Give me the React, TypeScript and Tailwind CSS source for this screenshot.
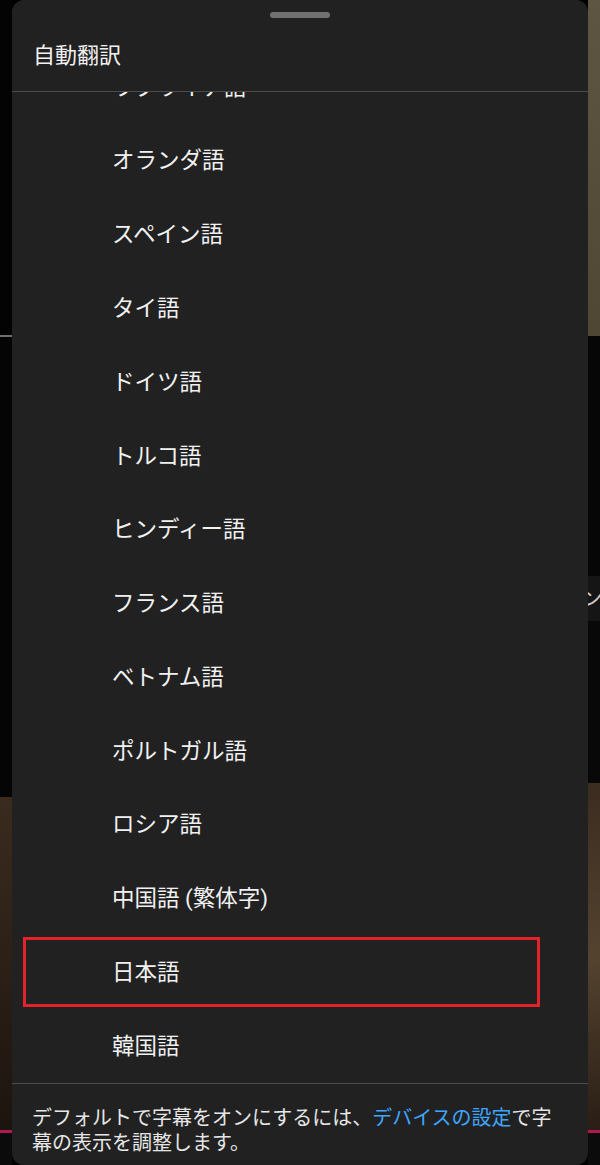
import React from "react";

const LANGS = [
  "ウクライナ語",
  "オランダ語",
  "スペイン語",
  "タイ語",
  "ドイツ語",
  "トルコ語",
  "ヒンディー語",
  "フランス語",
  "ベトナム語",
  "ポルトガル語",
  "ロシア語",
  "中国語 (繁体字)",
  "日本語",
  "韓国語",
];

function LeftEdge() {
  return (
    <div className="w-3 shrink-0 flex flex-col">
      <div className="h-[335px] bg-[#030303]" />
      <div className="h-[2px] bg-[#6e6e6e]" />
      <div className="h-[460px] bg-[#050505]" />
      <div className="h-[333px] bg-gradient-to-b from-[#3a2b1e] via-[#2c2017] to-[#1c140e]" />
      <div className="h-[3px] bg-[#b3174f]" />
      <div className="flex-1 bg-[#0b0b0b]" />
    </div>
  );
}

function RightEdge() {
  return (
    <div className="w-3 shrink-0 flex flex-col">
      <div className="h-[336px] bg-gradient-to-b from-[#5e5542] to-[#4f4634]" />
      <div className="h-[240px] bg-[#060606]" />
      <div className="h-[45px] bg-[#151515] overflow-hidden flex items-center">
        <span className="-ml-[6px] text-[20px] text-[#cfcfcf]">ン</span>
      </div>
      <div className="h-[162px] bg-[#080808]" />
      <div className="h-[347px] bg-gradient-to-b from-[#3b2c20] via-[#54432f] to-[#2a1e15]" />
      <div className="h-[3px] bg-[#b3174f]" />
      <div className="flex-1 bg-[#0b0b0b]" />
    </div>
  );
}

function LangRow({ label, marked }: { label: string; marked?: boolean }) {
  return (
    <div className="relative h-[73.8px] shrink-0 flex items-center pl-[100px] text-[22.5px] text-[#f1f1f1]">
      {label}
      {marked && (
        <div className="absolute left-[11px] top-[1px] w-[517px] h-[70px] border-[3.5px] border-[#e3232c]" />
      )}
    </div>
  );
}

export default function App() {
  return (
    <div className="w-[600px] h-[1165px] flex overflow-hidden bg-black font-['Roboto','Noto_Sans_CJK_JP',sans-serif]">
      <LeftEdge />

      {/* ── Bottom sheet ── */}
      <div className="w-[576px] shrink-0 flex flex-col bg-[#212121] rounded-xl overflow-hidden">
        <div className="h-[92px] shrink-0 flex flex-col border-b border-[#4c4c4c]">
          <div className="mt-3 mx-auto w-[60px] h-[6px] rounded-full bg-[#717171]" />
          <p className="mt-[23px] pl-[21px] text-[22px] leading-[30px] text-[#f1f1f1]">自動翻訳</p>
        </div>

        <div className="h-[991px] shrink-0 overflow-hidden flex flex-col">
          <div className="-mt-[41.5px] flex flex-col">
            {LANGS.map(l => (
              <LangRow key={l} label={l} marked={l === "日本語"} />
            ))}
          </div>
        </div>

        <p className="border-t border-[#4c4c4c] px-5 pt-[22px] text-[20px] leading-[25px] text-[#e6e6e6]">
          デフォルトで字幕をオンにするには、<span className="text-[#3ea6ff]">デバイスの設定</span>で字幕の表示を調整します。
        </p>
      </div>

      <RightEdge />
    </div>
  );
}
